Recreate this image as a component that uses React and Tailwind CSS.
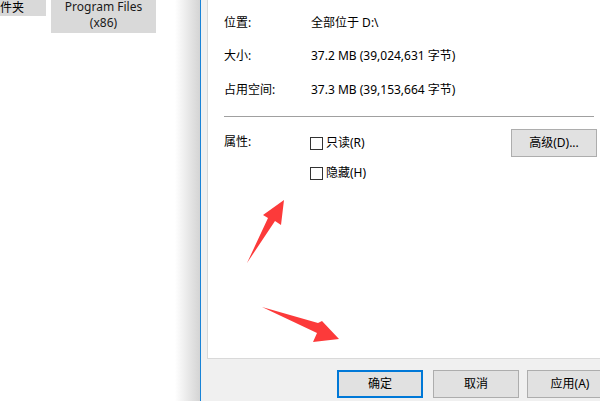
export default function App() {
  const font = { fontFamily: '"Segoe UI", "Noto Sans", "Noto Sans CJK SC", sans-serif' };
  return (
    <div
      className="relative w-[600px] h-[401px] overflow-hidden flex bg-white text-[12px] text-black"
      style={font}
    >
      {/* explorer tiles behind */}
      <div className="w-[175px] shrink-0 flex items-start gap-[5px]">
        <div className="w-[46px] h-[16px] bg-[#d9d9d9] overflow-hidden flex">
          <span className="ml-[-12px] leading-[15px] whitespace-nowrap">文件夹</span>
        </div>
        <div className="w-[105px] h-[33px] bg-[#d9d9d9] flex flex-col items-center leading-[16px] text-[#1a1a1a]">
          <span className="mt-[-1px]">Program Files</span>
          <span>(x86)</span>
        </div>
      </div>
      {/* dialog shadow */}
      <div className="w-[25px] shrink-0 bg-gradient-to-r from-white to-[#d4d4d4]" />
      <div className="w-px shrink-0 bg-[#1883d7]" />

      {/* dialog */}
      <div className="flex-1 min-w-0 bg-[#f0f0f0] pl-[6px] flex flex-col">
        <div className="h-[359px] bg-white border-l border-b border-[#d9d9d9] pl-[16px] pr-[6px]">
          <div className="flex items-center h-[17px] mt-[14px]">
            <span className="w-[87px]">位置:</span>
            <span>全部位于 D:\</span>
          </div>
          <div className="flex items-center h-[17px] mt-[16px]">
            <span className="w-[87px]">大小:</span>
            <span>37.2 MB (39,024,631 字节)</span>
          </div>
          <div className="flex items-center h-[17px] mt-[17px]">
            <span className="w-[87px]">占用空间:</span>
            <span>37.3 MB (39,153,664 字节)</span>
          </div>
          <div className="h-px bg-[#a0a0a0] mt-[18px]" />

          <div className="flex items-start mt-[12px]">
            <span className="w-[86px] shrink-0 mt-[4px] leading-[17px]">属性:</span>
            <div className="flex flex-col gap-[14px] mt-[6px]">
              <label className="flex items-center gap-[3px] h-[16px]">
                <span className="w-[13px] h-[13px] border border-[#333333] bg-white" />
                <span>只读(R)</span>
              </label>
              <label className="flex items-center gap-[3px] h-[16px]">
                <span className="w-[13px] h-[13px] border border-[#333333] bg-white" />
                <span>隐藏(H)</span>
              </label>
            </div>
            <button className="ml-auto mr-[-3px] w-[86px] h-[28px] shrink-0 bg-[#e1e1e1] border border-[#adadad] flex items-center justify-center">
              高级(D)...
            </button>
          </div>
        </div>

        <div className="flex gap-[10px] pl-[130px] mt-[11px]">
          <button className="w-[86px] h-[28px] shrink-0 bg-[#e1e1e1] border-2 border-[#0078d7] flex items-center justify-center">
            确定
          </button>
          <button className="w-[86px] h-[28px] shrink-0 bg-[#e1e1e1] border border-[#adadad] flex items-center justify-center">
            取消
          </button>
          <button className="w-[86px] h-[28px] shrink-0 bg-[#e1e1e1] border border-[#adadad] flex items-center justify-center ml-[-2px]">
            应用(A)
          </button>
        </div>
      </div>

      {/* red annotation arrows */}
      <svg className="absolute inset-0 pointer-events-none" width="600" height="401" viewBox="0 0 600 401">
        <polygon
          points="247,263 268,218 263,215 284,200 281,225 275,221"
          fill="#fc3a3a"
        />
        <polygon
          points="262,307 318,323 322,321 339,339 313,342 317,333"
          fill="#fc3a3a"
        />
      </svg>
    </div>
  );
}
